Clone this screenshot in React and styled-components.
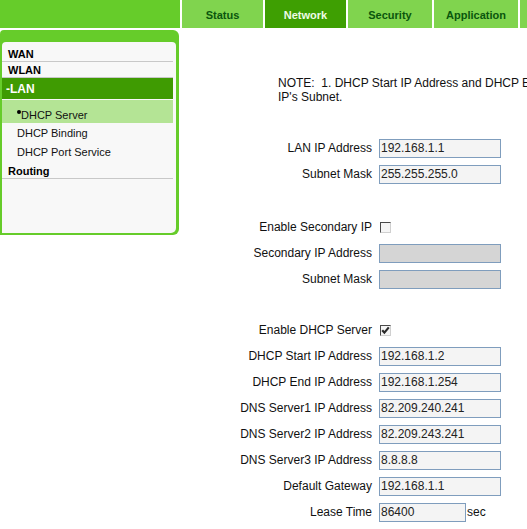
import React from "react";
import styled, { createGlobalStyle } from "styled-components";

const GlobalStyle = createGlobalStyle`
  html, body {
    margin: 0;
    padding: 0;
    overflow: hidden;
    background: #ffffff;
    font-family: "Liberation Sans", Arial, sans-serif;
    color: #111;
  }
`;

const Page = styled.div`
  width: 700px;
`;

const TopBar = styled.div`
  display: flex;
  height: 28px;
  gap: 2px;
`;

const Brand = styled.div`
  flex-shrink: 0;
  width: 180px;
  background: #66cc2a;
`;

const Tab = styled.div`
  flex-shrink: 0;
  width: ${(p) => p.$w}px;
  background: ${(p) => (p.$active ? "#3e9f02" : "#80d44e")};
  color: ${(p) => (p.$active ? "#eefbe6" : "#0a560d")};
  font-size: 11px;
  font-weight: bold;
  line-height: 30px;
  text-align: center;
`;

const Body = styled.div`
  display: flex;
  align-items: flex-start;
`;

const SidePanel = styled.div`
  flex-shrink: 0;
  box-sizing: border-box;
  width: 179px;
  height: 205px;
  margin-top: 2px;
  padding: 12px 3px 2px 2px;
  background: #66cc2a;
  border-radius: 4px 6px 6px 0;
`;

const SideInner = styled.div`
  height: 100%;
  padding-top: 4px;
  box-sizing: border-box;
  background: #f8f8f8;
  border-radius: 4px 4px 5px 0;
`;

const MenuHead = styled.div`
  height: 15px;
  line-height: 17px;
  margin: ${(p) => (p.$top ? "2px" : "0")} 3px 0 0;
  padding-left: 6px;
  font-size: 11px;
  font-weight: bold;
  color: #000;
  border-bottom: 1px solid #c8c8c8;
`;

const MenuOpen = styled.div`
  height: 21px;
  line-height: 23px;
  margin-right: 3px;
  padding-left: 4px;
  background: #3f9b02;
  color: #ffffff;
  font-size: 12px;
  font-weight: bold;
`;

const SubItem = styled.div`
  box-sizing: border-box;
  height: ${(p) => (p.$active ? 23 : 19)}px;
  margin: ${(p) => (p.$active ? "1px" : "0")} 3px 0 0;
  padding: ${(p) => (p.$active ? "8px" : "3px")} 0 0 15px;
  line-height: 15px;
  font-size: 11px;
  color: #111;
  background: ${(p) => (p.$active ? "#b4e495" : "transparent")};
`;

const Dot = styled.span`
  display: inline-block;
  width: 4px;
  height: 4px;
  border-radius: 50%;
  background: #000;
  vertical-align: 5px;
`;

const Main = styled.div`
  flex: 1;
  min-width: 0;
  padding-top: 48px;
`;

const Note = styled.div`
  margin-left: 99px;
  font-size: 12px;
  line-height: 14px;
  white-space: nowrap;
  color: #111;
`;

const Form = styled.div`
  margin-top: 31px;
  display: flex;
  flex-direction: column;
`;

const Row = styled.div`
  display: grid;
  grid-template-columns: 193px auto;
  column-gap: 7px;
  align-items: center;
  height: 26px;
  font-size: 12px;
`;

const Spacer = styled.div`
  height: ${(p) => p.$h}px;
`;

const Label = styled.div`
  text-align: right;
  white-space: nowrap;
  color: #111;
`;

const Field = styled.div`
  display: flex;
  align-items: center;
`;

const TextBox = styled.input`
  box-sizing: border-box;
  width: ${(p) => p.$w || 122}px;
  height: 19px;
  margin: 0;
  padding: 0 1px;
  border: 1px solid #7f9dbd;
  border-radius: 0;
  background: ${(p) => (p.disabled ? "#d5d5d5" : "#f4f4f4")};
  font-family: "Liberation Sans", Arial, sans-serif;
  font-size: 12px;
  color: #222;
  outline: none;
`;

const Unit = styled.span`
  margin-left: 1px;
  color: #111;
`;

const Check = styled.span`
  box-sizing: border-box;
  display: inline-flex;
  align-items: center;
  justify-content: center;
  width: 11px;
  height: 11px;
  margin-left: 1px;
  border-top: 1px solid #4a4a4a;
  border-left: 1px solid #4a4a4a;
  border-right: 1px solid #d0d0d0;
  border-bottom: 1px solid #d0d0d0;
  background: #f6f6f6;
`;

const CheckBox = ({ checked }) => (
  <Check>
    {checked && (
      <svg width="9" height="9" viewBox="0 0 9 9">
        <path d="M1.2 4.2 L3.4 6.6 L7.8 1.4" fill="none" stroke="#2b2b2b" strokeWidth="2.2" />
      </svg>
    )}
  </Check>
);

const Input = ({ label, value, disabled, width, unit }) => (
  <Row>
    <Label>{label}</Label>
    <Field>
      <TextBox readOnly defaultValue={value} disabled={disabled} $w={width} />
      {unit && <Unit>{unit}</Unit>}
    </Field>
  </Row>
);

const tabs = [
  { name: "Status", w: 81 },
  { name: "Network", w: 81, active: true },
  { name: "Security", w: 84 },
  { name: "Application", w: 84 },
  { name: "", w: 84 },
];

export default function App() {
  return (
    <Page>
      <GlobalStyle />
      <TopBar>
        <Brand />
        {tabs.map((t, i) => (
          <Tab key={i} $w={t.w} $active={t.active}>
            {t.name}
          </Tab>
        ))}
      </TopBar>
      <Body>
        <SidePanel>
          <SideInner>
            <MenuHead>WAN</MenuHead>
            <MenuHead>WLAN</MenuHead>
            <MenuOpen>-LAN</MenuOpen>
            <SubItem $active>
              <Dot />
              DHCP Server
            </SubItem>
            <SubItem>DHCP Binding</SubItem>
            <SubItem>DHCP Port Service</SubItem>
            <MenuHead $top>Routing</MenuHead>
          </SideInner>
        </SidePanel>
        <Main>
          <Note>
            NOTE:&nbsp; 1. DHCP Start IP Address and DHCP End IP Address should be in the same LAN
            <br />
            IP's Subnet.
          </Note>
          <Form>
            <Input label="LAN IP Address" value="192.168.1.1" />
            <Input label="Subnet Mask" value="255.255.255.0" />
            <Spacer $h={27} />
            <Row>
              <Label>Enable Secondary IP</Label>
              <Field>
                <CheckBox />
              </Field>
            </Row>
            <Input label="Secondary IP Address" value="" disabled />
            <Input label="Subnet Mask" value="" disabled />
            <Spacer $h={25} />
            <Row>
              <Label>Enable DHCP Server</Label>
              <Field>
                <CheckBox checked />
              </Field>
            </Row>
            <Input label="DHCP Start IP Address" value="192.168.1.2" />
            <Input label="DHCP End IP Address" value="192.168.1.254" />
            <Input label="DNS Server1 IP Address" value="82.209.240.241" />
            <Input label="DNS Server2 IP Address" value="82.209.243.241" />
            <Input label="DNS Server3 IP Address" value="8.8.8.8" />
            <Input label="Default Gateway" value="192.168.1.1" />
            <Input label="Lease Time" value="86400" width={87} unit="sec" />
          </Form>
        </Main>
      </Body>
    </Page>
  );
}
